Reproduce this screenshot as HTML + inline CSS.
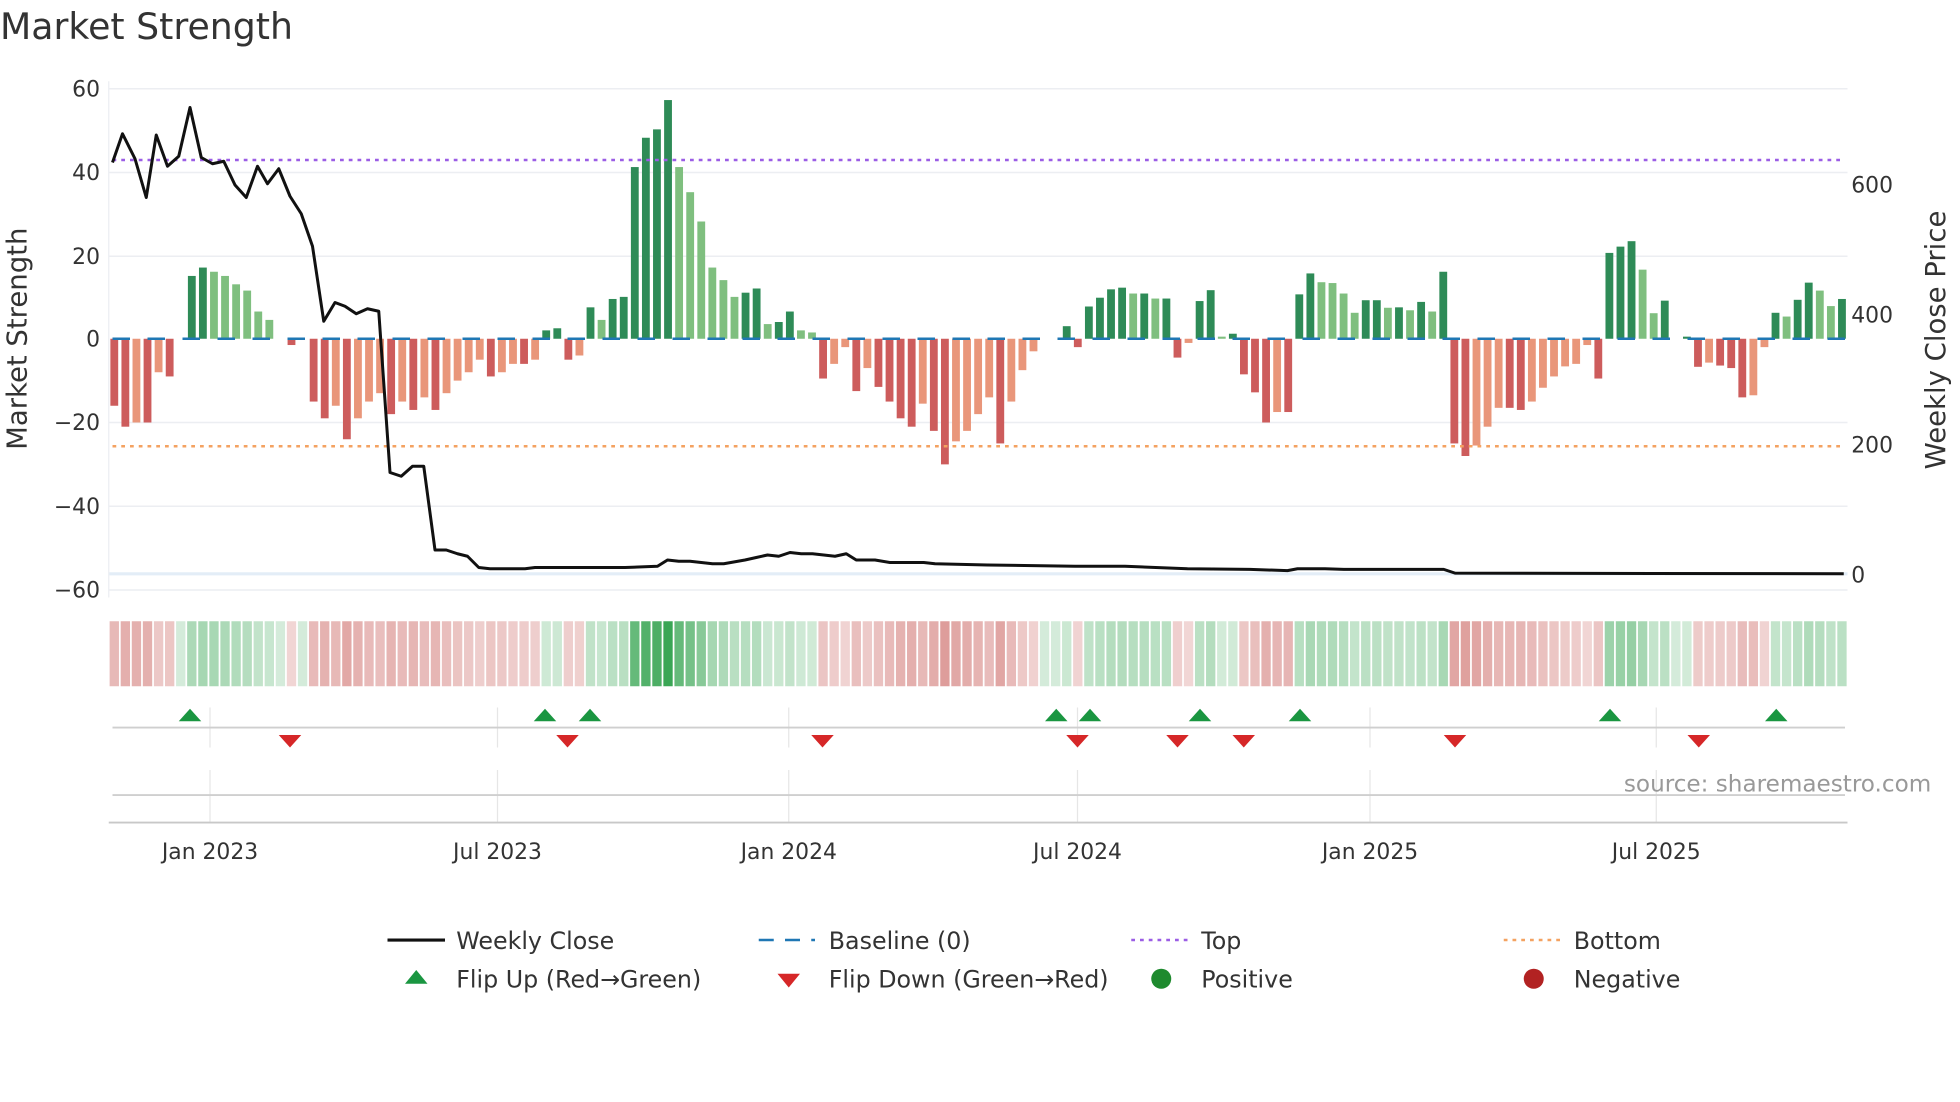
<!DOCTYPE html>
<html><head><meta charset="utf-8"><style>
html,body{margin:0;padding:0;background:#fff;width:1960px;height:1102px;overflow:hidden}
svg{display:block;font-family:"DejaVu Sans","Liberation Sans",sans-serif}
</style></head><body>
<svg id="s" width="1960" height="1102" viewBox="0 0 1568 881.6" xmlns="http://www.w3.org/2000/svg">
<text x="0" y="31" font-size="29" fill="#333">Market Strength</text>
<g stroke="#eceef2" stroke-width="1.2">
<line x1="87" x2="1478" y1="71" y2="71"/><line x1="87" x2="1478" y1="138" y2="138"/><line x1="87" x2="1478" y1="205" y2="205"/><line x1="87" x2="1478" y1="338" y2="338"/><line x1="87" x2="1478" y1="405" y2="405"/><line x1="87" x2="1478" y1="472" y2="472"/>
</g>
<line x1="87" x2="1478" y1="459" y2="459" stroke="#e3edf7" stroke-width="2.5"/>
<line x1="87" x2="87" y1="65" y2="478" stroke="#eceef2"/>
<g font-size="17.5" fill="#333" text-anchor="end">
<text x="80" y="77">60</text><text x="80" y="144">40</text><text x="80" y="211">20</text><text x="80" y="277">0</text><text x="80" y="344">−20</text><text x="80" y="411">−40</text><text x="80" y="478">−60</text>
</g>
<g font-size="17.5" fill="#333">
<text x="1481" y="154">600</text><text x="1481" y="258">400</text><text x="1481" y="362">200</text><text x="1481" y="466">0</text>
</g>
<text transform="translate(21,271) rotate(-90)" font-size="22" fill="#333" text-anchor="middle">Market Strength</text>
<text transform="translate(1556,272) rotate(-90)" font-size="22" fill="#333" text-anchor="middle">Weekly Close Price</text>
<g id="bars"></g>
<g id="heat"></g>
<line x1="90" x2="1476" y1="271" y2="271" stroke="#1f77b4" stroke-width="2" stroke-dasharray="14,14"/>
<line x1="90" x2="1476" y1="128" y2="128" stroke="#9b5de5" stroke-width="2" stroke-dasharray="3,4"/>
<line x1="90" x2="1476" y1="357" y2="357" stroke="#f4a261" stroke-width="2" stroke-dasharray="3,4"/>
<polyline id="price" fill="none" stroke="#111" stroke-width="2.4" stroke-linejoin="round" points="90,130 98,107 108,127 117,158 125,108 134,133 143,125 152,86 161,126 170,131 179,129 188,148 197,158 206,133 214,147 223,135 232,157 241,171 250,197 259,257 268,242 276,245 285,251 294,247 303,249 312,378 321,381 330,373 339,373 348,440 357,440 366,443 374,445 383,454 392,455 410,455 420,455 428,454 500,454 526,453 534,448 543,449 552,449 570,451 579,451 596,448 605,446 614,444 623,445 632,442 641,443 650,443 659,444 668,445 677,443 685,448 700,448 712,450 730,450 739,450 748,451 790,452 860,453 900,453 950,455 1000,455.5 1030,456.5 1038,455 1060,455 1075,455.5 1155,455.5 1164,458.5 1475,459"/>
<g stroke="#e6e6e6" stroke-width="1">
<line x1="168" x2="168" y1="566" y2="598"/><line x1="398" x2="398" y1="566" y2="598"/><line x1="631" x2="631" y1="566" y2="598"/><line x1="862" x2="862" y1="566" y2="598"/><line x1="1096" x2="1096" y1="566" y2="598"/><line x1="1325" x2="1325" y1="566" y2="598"/>
<line x1="168" x2="168" y1="616" y2="658"/><line x1="398" x2="398" y1="616" y2="658"/><line x1="631" x2="631" y1="616" y2="658"/><line x1="862" x2="862" y1="616" y2="658"/><line x1="1096" x2="1096" y1="616" y2="658"/><line x1="1325" x2="1325" y1="616" y2="658"/>
</g>
<line x1="90" x2="1476" y1="582" y2="582" stroke="#cfcfcf" stroke-width="1.5"/>
<line x1="90" x2="1476" y1="636" y2="636" stroke="#cfcfcf" stroke-width="1.5"/>
<line x1="87" x2="1478" y1="658" y2="658" stroke="#c8c8c8" stroke-width="1.5"/>
<g id="flips"></g>
<text x="1545" y="633" font-size="18.5" fill="#999" text-anchor="end">source: sharemaestro.com</text>
<g font-size="17.5" fill="#333" text-anchor="middle">
<text x="168" y="687">Jan 2023</text><text x="398" y="687">Jul 2023</text><text x="631" y="687">Jan 2024</text><text x="862" y="687">Jul 2024</text><text x="1096" y="687">Jan 2025</text><text x="1325" y="687">Jul 2025</text>
</g>
<g font-size="19" fill="#333">
<line x1="310" x2="356" y1="752" y2="752" stroke="#111" stroke-width="2.5"/><text x="365" y="759">Weekly Close</text>
<line x1="607" x2="652" y1="752" y2="752" stroke="#1f77b4" stroke-width="2" stroke-dasharray="12,9"/><text x="663" y="759">Baseline (0)</text>
<line x1="905" x2="950" y1="752" y2="752" stroke="#9b5de5" stroke-width="2" stroke-dasharray="3,4"/><text x="961" y="759">Top</text>
<line x1="1203" x2="1248" y1="752" y2="752" stroke="#f4a261" stroke-width="2" stroke-dasharray="3,4"/><text x="1259" y="759">Bottom</text>
<polygon points="324,787 342,787 333,776" fill="#1a9641"/><text x="365" y="790">Flip Up (Red→Green)</text>
<polygon points="622,779 640,779 631,790" fill="#d62728"/><text x="663" y="790">Flip Down (Green→Red)</text>
<circle cx="929" cy="783" r="8" fill="#1e8a2e"/><text x="961" y="790">Positive</text>
<circle cx="1227" cy="783" r="8" fill="#b22222"/><text x="1259" y="790">Negative</text>
</g>
</svg>
<script>
var v=[-16,-21,-20,-20,-8,-9,0,15,17,16,15,13,11.5,6.5,4.5,0,-1.5,0,-15,-19,-16,-24,-19,-15,-13,-18,-15,-17,-14,-17,-13,-10,-8,-5,-9,-8,-6,-6,-5,2,2.5,-5,-4,7.5,4.5,9.5,10,41,48,50,57,41,35,28,17,14,10,11,12,3.5,4,6.5,2,1.5,-9.5,-6,-2,-12.5,-7,-11.5,-15,-19,-21,-15.5,-22,-30,-24.5,-22,-18,-14,-25,-15,-7.5,-3,0,0,3,-2,7.7,9.8,11.8,12.2,10.8,10.8,9.6,9.6,-4.5,-1,9,11.6,0.5,1.2,-8.5,-12.8,-20,-17.5,-17.5,10.6,15.6,13.5,13.3,10.8,6.2,9.2,9.2,7.4,7.5,6.8,8.8,6.5,16,-25,-28,-25.5,-21,-16.5,-16.5,-17,-15,-11.7,-9,-6.6,-6,-1.5,-9.5,20.5,22,23.3,16.5,6.1,9.1,0,0.5,-6.7,-5.7,-6.4,-7,-14,-13.5,-2,6.2,5.3,9.3,13.4,11.5,7.8,9.5];
var NS="http://www.w3.org/2000/svg";
function el(t,a,p){var e=document.createElementNS(NS,t);for(var k in a)e.setAttribute(k,a[k]);document.getElementById(p).appendChild(e);}
var n=v.length,x0=87,w=(1478-87)/n;
for(var i=0;i<n;i++){var x=x0+i*w,val=v[i],p=i?v[i-1]:0,c;
 if(val>0)c=(val>=p)?"#2e8b57":"#7fbf7f";else c=(val<=p)?"#cd5c5c":"#e9967a";
 var y=271-val*3.35;
 if(val!==0)el("rect",{x:x+1.3,y:Math.min(y,271),width:w-2.6,height:Math.abs(val*3.35),fill:c},"bars");
 var op=0.22+Math.min(Math.abs(val),57)/57*0.78;
 el("rect",{x:x+0.7,y:497,width:w-1.4,height:52,fill:val>=0?"#3aa655":"#c9605c","fill-opacity":val>=0?op:Math.min(1,op*0.9+0.05)},"heat");}
[152,436,472,845,872,960,1040,1288,1421].forEach(function(x){el("polygon",{points:(x-9)+",577 "+(x+9)+",577 "+x+",567",fill:"#1a9641"},"flips");});
[232,454,658,862,942,995,1164,1359].forEach(function(x){el("polygon",{points:(x-9)+",588 "+(x+9)+",588 "+x+",598",fill:"#d62728"},"flips");});
</script>
</body></html>
